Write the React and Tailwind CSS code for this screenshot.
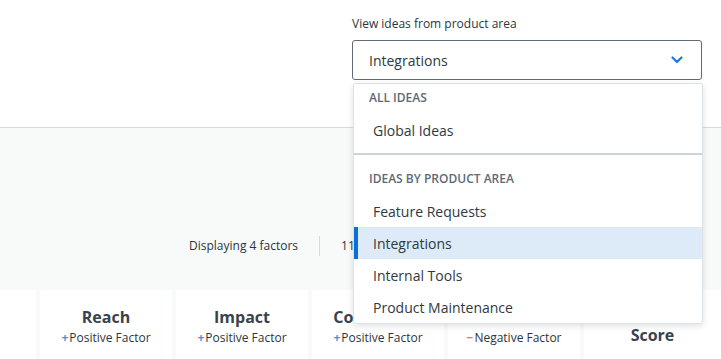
const ITEMS = ['Feature Requests', 'Integrations', 'Internal Tools', 'Product Maintenance']

const FACTORS = [
  { name: 'Reach', kind: 'positive' },
  { name: 'Impact', kind: 'positive' },
  { name: 'Confidence', kind: 'positive' },
  { name: 'Effort', kind: 'negative' },
]

function FactorCard({ factor }) {
  const positive = factor.kind === 'positive'
  return (
    <div className="w-[132px] shrink-0 bg-white flex flex-col items-center pt-[16px]">
      <div className="text-[16px] leading-[22px] font-bold text-[#38434d]">{factor.name}</div>
      <div className="text-[12px] leading-[18px] text-[#2c353d] mt-[1px] flex items-center">
        <span className={positive ? 'text-[#4a90e2] font-bold mr-[1px]' : 'text-[#f0707c] font-bold mr-[1px]'}>
          {positive ? '+' : '−'}
        </span>
        {positive ? 'Positive Factor' : 'Negative Factor'}
      </div>
    </div>
  )
}

function Dropdown() {
  return (
    <div className="absolute left-[353px] top-[83px] w-[350px] bg-white rounded-[3px] border border-[#dde2e6] shadow-[0_2px_6px_rgba(0,0,0,0.12)] overflow-hidden">
      <div className="pl-[15px] pt-[6px] pb-[8px] text-[12px] leading-[16px] font-semibold text-[#5c6a76] uppercase">
        All Ideas
      </div>
      <div className="h-[32px] flex items-center pl-[19px] text-[14px] text-[#2f3941]">Global Ideas</div>
      <div className="mt-[7px] h-[2px] bg-[#cbd3d9]" />
      <div className="pl-[15px] pt-[16px] pb-[8px] text-[12px] leading-[16px] font-semibold text-[#5c6a76] uppercase">
        Ideas by product area
      </div>
      {ITEMS.map((item) => {
        const active = item === 'Integrations'
        return (
          <div
            key={item}
            className={
              active
                ? 'h-[32px] flex items-center pl-[15px] text-[14px] text-[#2f3941] bg-[#ddebf8] border-l-4 border-[#0b6fd6]'
                : 'h-[32px] flex items-center pl-[19px] text-[14px] text-[#2f3941]'
            }
          >
            {item}
          </div>
        )
      })}
    </div>
  )
}

export default function App() {
  return (
    <div className="relative w-[721px] h-[359px] overflow-hidden bg-[#f8f9f9] font-['Open_Sans',sans-serif]">
      <div className="h-[128px] bg-white border-b border-[#d5dade] flex justify-start">
        <div className="ml-[352px] pt-[15px] w-[350px]">
          <div className="text-[12px] leading-[18px] text-[#2c353d]">View ideas from product area</div>
          <div className="mt-[7px] h-[40px] w-[350px] border border-[#5f6a73] rounded-[3px] flex items-center justify-between pl-[16px] pr-[18px]">
            <span className="text-[14px] text-[#2f3941]">Integrations</span>
            <svg width="12" height="8" viewBox="0 0 12 8" fill="none">
              <path d="M1.5 1.5 L6 6 L10.5 1.5" stroke="#1a78de" strokeWidth="2.2" strokeLinecap="round" strokeLinejoin="round" />
            </svg>
          </div>
        </div>
      </div>

      <div className="h-[162px] flex items-end pb-[34px] pl-[189px]">
        <div className="flex items-center text-[12px] text-[#2c353d]">
          <span>Displaying 4 factors</span>
          <span className="mx-[21px] w-[1px] h-[20px] bg-[#d3dade]" />
          <span>11 ideas</span>
        </div>
      </div>

      <div className="flex gap-[4px] h-[80px]">
        <div className="w-[36px] shrink-0 bg-white" />
        {FACTORS.map((f) => (
          <FactorCard key={f.name} factor={f} />
        ))}
        <div className="flex-1 bg-white flex justify-center pt-[34px]">
          <span className="text-[16px] leading-[22px] font-bold text-[#38434d]">Score</span>
        </div>
      </div>

      <Dropdown />
    </div>
  )
}
